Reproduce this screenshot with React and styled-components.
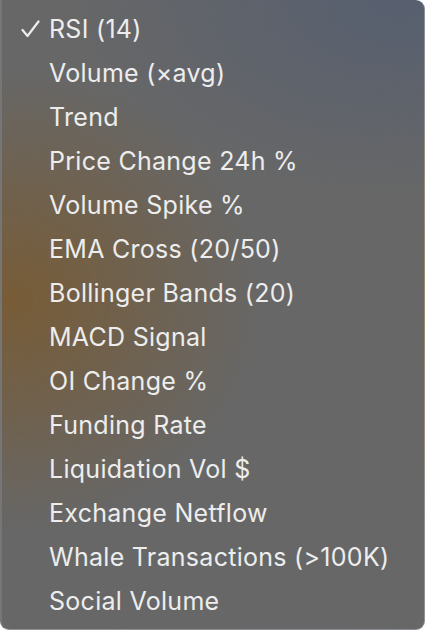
import React from "react";
import styled, {createGlobalStyle} from "styled-components";

const GlobalStyle = createGlobalStyle`
  html, body {
    margin: 0;
    padding: 0;
    background: #ffffff;
  }
`;

// menu panel, top-left corner is cut by the crop
const Menu = styled.div`
  box-sizing: border-box;
  width: 425px;
  height: 630px;
  padding: 7px 0 0 0;
  border-radius: 0 9px 9px 9px;
  border-right: 1px solid rgba(255, 255, 255, 0.28);
  border-bottom: 1px solid rgba(255, 255, 255, 0.28);
  border-left: 2px solid #767676;
  overflow: hidden;
  background:
    radial-gradient(ellipse 250px 230px at 10px 300px, rgba(125, 88, 38, 0.75), rgba(125, 88, 38, 0) 100%),
    radial-gradient(ellipse 340px 200px at 400px 0px, rgba(80, 92, 115, 0.7), rgba(80, 92, 115, 0) 100%),
    #676767;
  font-family: Inter, "Liberation Sans", sans-serif;
`;

const Item = styled.div`
  display: flex;
  align-items: center;
  height: 44px;
  color: #ededed;
  font-size: 25px;
  letter-spacing: 0.28px;
`;

const Check = styled.span`
  width: 47px;
  display: flex;
  justify-content: flex-end;
  padding-right: 9px;
  box-sizing: border-box;
`;

const items = [
    "RSI (14)",
    "Volume (×avg)",
    "Trend",
    "Price Change 24h %",
    "Volume Spike %",
    "EMA Cross (20/50)",
    "Bollinger Bands (20)",
    "MACD Signal",
    "OI Change %",
    "Funding Rate",
    "Liquidation Vol $",
    "Exchange Netflow",
    "Whale Transactions (>100K)",
    "Social Volume",
];

export default function App() {
    // only RSI is selected
    const selected = "RSI (14)";

    return (
        <>
            <GlobalStyle/>
            <Menu>
                {items.map((name) => (
                    <Item key={name}>
                        <Check>
                            {name === selected && (
                                <svg width="19" height="18" viewBox="0 0 19 18">
                                    <path d="M1.5 10 L6.5 16 L17.5 1.5" fill="none" stroke="#ededed"
                                          strokeWidth="2.2" strokeLinecap="round" strokeLinejoin="round"/>
                                </svg>
                            )}
                        </Check>
                        {name}
                    </Item>
                ))}
            </Menu>
        </>
    );
}
